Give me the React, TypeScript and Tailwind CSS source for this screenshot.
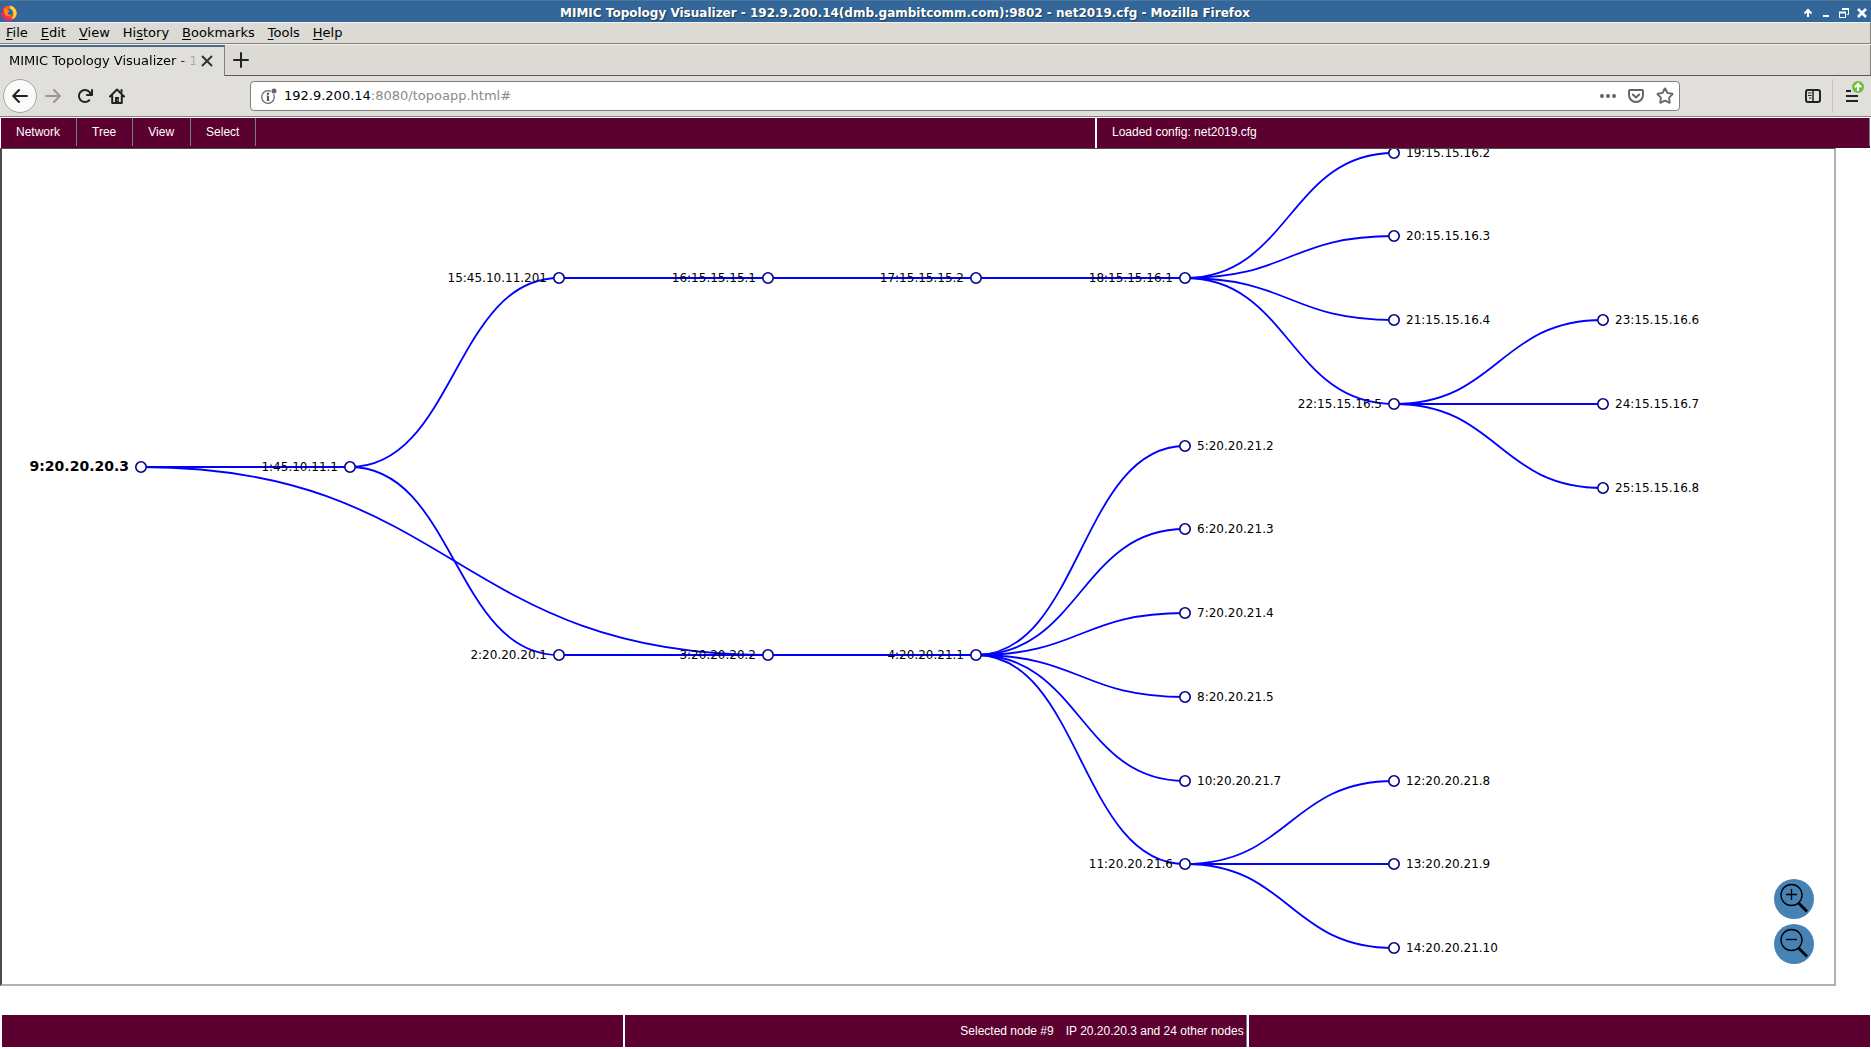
import React from 'react';
import { Plus, Star, X } from 'lucide-react';

type TopoNode = { id: number; ip: string; x: number; y: number; side: 'left' | 'right' };

const COLS = [139, 348, 557, 766, 974, 1183, 1392, 1601];

const nodes: TopoNode[] = [
  { id: 9, ip: '20.20.20.3', x: COLS[0], y: 318, side: 'left' },
  { id: 1, ip: '45.10.11.1', x: COLS[1], y: 318, side: 'left' },
  { id: 15, ip: '45.10.11.201', x: COLS[2], y: 129, side: 'left' },
  { id: 16, ip: '15.15.15.1', x: COLS[3], y: 129, side: 'left' },
  { id: 17, ip: '15.15.15.2', x: COLS[4], y: 129, side: 'left' },
  { id: 18, ip: '15.15.16.1', x: COLS[5], y: 129, side: 'left' },
  { id: 19, ip: '15.15.16.2', x: COLS[6], y: 4, side: 'right' },
  { id: 20, ip: '15.15.16.3', x: COLS[6], y: 87, side: 'right' },
  { id: 21, ip: '15.15.16.4', x: COLS[6], y: 171, side: 'right' },
  { id: 22, ip: '15.15.16.5', x: COLS[6], y: 255, side: 'left' },
  { id: 23, ip: '15.15.16.6', x: COLS[7], y: 171, side: 'right' },
  { id: 24, ip: '15.15.16.7', x: COLS[7], y: 255, side: 'right' },
  { id: 25, ip: '15.15.16.8', x: COLS[7], y: 339, side: 'right' },
  { id: 2, ip: '20.20.20.1', x: COLS[2], y: 506, side: 'left' },
  { id: 3, ip: '20.20.20.2', x: COLS[3], y: 506, side: 'left' },
  { id: 4, ip: '20.20.21.1', x: COLS[4], y: 506, side: 'left' },
  { id: 5, ip: '20.20.21.2', x: COLS[5], y: 297, side: 'right' },
  { id: 6, ip: '20.20.21.3', x: COLS[5], y: 380, side: 'right' },
  { id: 7, ip: '20.20.21.4', x: COLS[5], y: 464, side: 'right' },
  { id: 8, ip: '20.20.21.5', x: COLS[5], y: 548, side: 'right' },
  { id: 10, ip: '20.20.21.7', x: COLS[5], y: 632, side: 'right' },
  { id: 11, ip: '20.20.21.6', x: COLS[5], y: 715, side: 'left' },
  { id: 12, ip: '20.20.21.8', x: COLS[6], y: 632, side: 'right' },
  { id: 13, ip: '20.20.21.9', x: COLS[6], y: 715, side: 'right' },
  { id: 14, ip: '20.20.21.10', x: COLS[6], y: 799, side: 'right' },
];

const links: [number, number][] = [
  [9, 1], [9, 3], [1, 15], [1, 2], [15, 16], [16, 17], [17, 18],
  [18, 19], [18, 20], [18, 21], [18, 22], [22, 23], [22, 24], [22, 25],
  [2, 3], [3, 4], [4, 5], [4, 6], [4, 7], [4, 8], [4, 10], [4, 11],
  [11, 12], [11, 13], [11, 14],
];

const find = (id: number) => nodes.find((n) => n.id === id)!;

// d3-style horizontal diagonal
function diagonal([from, to]: [number, number]) {
  const s = find(from);
  const t = find(to);
  const mid = (s.x + t.x) / 2;
  return `M${s.x},${s.y}C${mid},${s.y} ${mid},${t.y} ${t.x},${t.y}`;
}

function FirefoxLogo() {
  return (
    <svg className="h-4 w-4" viewBox="0 0 16 16">
      <circle cx="8" cy="8.300" r="7.500" fill="#ff5a1f" />
      <path d="M1 5.500C0 10 2 15 7.500 15.900C12 16 15.500 12.500 15.600 8C13 14 6 14 4 9.500C3 7 3 5 3.500 3.200C2 3.800 1.400 4.600 1 5.500Z" fill="#f0245e" />
      <path d="M9 .5C14 1.500 16.300 6 15.500 9.500C14.800 13 12 14.300 10 14C13 12 13 9 11.500 7C10 5 8.500 3 9 .5Z" fill="#ffd52e" />
      <circle cx="8" cy="7.800" r="3.800" fill="#1f5fc0" />
      <path d="M3.200 3.500C5 3.200 6.500 4 7.200 5.200L9 5.800C8.600 7 7 7 6.600 8.200C7 10 9.500 10 11 8.800C10 12 5 12.500 3.600 9C3 7 2.900 5 3.200 3.500Z" fill="#ff8a16" />
    </svg>
  );
}

function TitleBar() {
  return (
    <header className="flex h-[22px] items-center border-t border-[#4c779c] bg-[#336699] px-px pt-0.5 text-white">
      <FirefoxLogo />
      <h1 className="flex-1 pr-2.5 text-center text-xs leading-5 font-bold [text-shadow:1px_1px_1px_#1c3a58]">
        MIMIC Topology Visualizer - 192.9.200.14(dmb.gambitcomm.com):9802 - net2019.cfg - Mozilla Firefox
      </h1>
      <div className="flex items-center gap-2 pr-[3px]">
        <button aria-label="Shade">
          <svg className="h-2.5 w-2.5" viewBox="0 0 10 10" fill="none" stroke="white" strokeWidth="2">
            <path d="M5 9V2M1.500 5.500L5 2L8.500 5.500" />
          </svg>
        </button>
        <button aria-label="Minimize">
          <svg className="h-2.5 w-2.5" viewBox="0 0 10 10">
            <path d="M2 7H8V9H2Z" fill="white" />
          </svg>
        </button>
        <button aria-label="Restore">
          <svg className="h-2.5 w-2.5" viewBox="0 0 10 10" fill="none" stroke="white">
            <path d="M3.500 2V1H9.500V6.500H8M.5 4.500H6.500V9.500H.5Z" />
            <path d="M3 1H10M0 4.500H7" strokeWidth="2" />
          </svg>
        </button>
        <button aria-label="Close">
          <svg className="h-2.5 w-2.5" viewBox="0 0 10 10" stroke="white" strokeWidth="2.500">
            <path d="M1 1L9 9M9 1L1 9" />
          </svg>
        </button>
      </div>
    </header>
  );
}

const browserMenus = [
  ['', 'F', 'ile'],
  ['', 'E', 'dit'],
  ['', 'V', 'iew'],
  ['Hi', 's', 'tory'],
  ['', 'B', 'ookmarks'],
  ['', 'T', 'ools'],
  ['', 'H', 'elp'],
];

function BrowserMenuBar() {
  return (
    <nav className="flex h-[22px] items-center gap-[13px] border-t border-r border-b border-t-[#f2f1ee] border-r-[#857f78] border-b-[#857f78] bg-[#dbdad5] px-1.5 text-[13px] leading-5">
      {browserMenus.map(([before, key, after]) => (
        <button key={before + key + after}>
          {before}
          <span className="underline underline-offset-2">{key}</span>
          {after}
        </button>
      ))}
    </nav>
  );
}

function TabBar() {
  return (
    <div className="flex h-8 border-t border-[#f2f1ee] bg-[#dbdad5] text-[13px]">
      <div className="flex w-[225px] items-center border-t-2 border-r border-t-[#4a6a8d] border-r-[#857f78] bg-[#e0dfdc] pr-2 pb-0.5 pl-[9px]">
        <span className="flex-1 overflow-hidden bg-linear-to-r from-black from-90% to-transparent bg-clip-text whitespace-nowrap text-transparent">
          MIMIC Topology Visualizer - 192.9.200.14
        </span>
        <button aria-label="Close tab">
          <X className="h-[18px] w-[18px] text-[#333]" strokeWidth={2.5} />
        </button>
      </div>
      <div className="flex flex-1 items-center border-r border-b border-r-[#857f78] border-b-[#5c5750] pl-1">
        <button aria-label="New tab">
          <Plus className="h-6 w-6 text-[#222]" strokeWidth={2} />
        </button>
      </div>
    </div>
  );
}

function NavBar() {
  return (
    <div className="flex h-[41px] items-center border-b border-[#857f78] bg-[#e0dfdc]">
      <button className="ml-[3px] flex h-[34px] w-[34px] items-center justify-center rounded-full border border-[#a5a39f] bg-[#fafaf9]" aria-label="Back">
        <svg className="h-4 w-4" viewBox="0 0 16 16" fill="none" stroke="#222" strokeWidth="2" strokeLinecap="round" strokeLinejoin="round">
          <path d="M15 8H1.500M7 2L1.200 8L7 14" />
        </svg>
      </button>
      <button className="ml-2" aria-label="Forward">
        <svg className="h-4 w-4" viewBox="0 0 16 16" fill="none" stroke="#989793" strokeWidth="2" strokeLinecap="round" strokeLinejoin="round">
          <path d="M1 8H14.500M9 2L14.800 8L9 14" />
        </svg>
      </button>
      <button className="ml-4" aria-label="Reload">
        <svg className="h-4 w-4" viewBox="0 0 16 16" fill="#222">
          <path d="M15 1a1 1 0 0 0-1 1v2.418A6.995 6.995 0 1 0 8 15a6.954 6.954 0 0 0 4.950-2.050 1 1 0 0 0-1.414-1.414A5.019 5.019 0 1 1 12.549 6H10a1 1 0 0 0 0 2h5a1 1 0 0 0 1-1V2a1 1 0 0 0-1-1z" />
        </svg>
      </button>
      <button className="ml-4" aria-label="Home">
        <svg className="h-4 w-4" viewBox="0 0 16 16" fill="none" stroke="#222" strokeWidth="2" strokeLinejoin="round" strokeLinecap="round">
          <path d="M1 8.500L8 1.500L15 8.500M3.200 8V15H12.800V8" />
          <path d="M6 9H10V15H6Z" fill="#222" stroke="none" />
          <path d="M8.500 12H9" stroke="#e0dfdc" strokeWidth="1" />
          <path d="M12.500 2V4" />
        </svg>
      </button>

      <div className="ml-[125px] flex h-[30px] flex-1 items-center rounded border border-[#857f78] bg-white px-2.5">
        <svg className="h-4 w-4 shrink-0" viewBox="0 0 16 16">
          <circle cx="7" cy="9" r="6.300" fill="none" stroke="#666" strokeWidth="1.200" />
          <path d="M7 8V12.500" stroke="#555" strokeWidth="2" />
          <circle cx="7" cy="5.800" r="1.200" fill="#555" />
          <path d="M5.500 8H7M5.500 12.300H8.500" stroke="#555" strokeWidth="1" />
          <circle cx="13" cy="3" r="3.300" fill="white" />
          <circle cx="13" cy="3" r="2.500" fill="#666" />
        </svg>
        <a href="#" className="ml-[7px] flex-1 text-[13px]">
          192.9.200.14<span className="text-[#8a8a8a]">:8080/topoapp.html#</span>
        </a>
        <button aria-label="Page actions">
          <svg className="h-4 w-4" viewBox="0 0 16 16" fill="#666">
            <circle cx="2" cy="8" r="2" />
            <circle cx="8" cy="8" r="2" />
            <circle cx="14" cy="8" r="2" />
          </svg>
        </button>
        <button className="ml-3" aria-label="Save to Pocket">
          <svg className="h-4 w-4" viewBox="0 0 16 16" fill="none" stroke="#666" strokeWidth="2" strokeLinecap="round" strokeLinejoin="round">
            <path d="M2 2H14Q15 2 15 3V7A7 7 0 0 1 1 7V3Q1 2 2 2Z" />
            <path d="M4.800 6.500L8 9.500L11.200 6.500" />
          </svg>
        </button>
        <button className="ml-3 -mr-[5px]" aria-label="Bookmark">
          <Star className="h-[18px] w-[18px] text-[#666]" strokeWidth={2.5} />
        </button>
      </div>

      <button className="ml-[125px]" aria-label="Sidebars">
        <svg className="h-4 w-4" viewBox="0 0 16 16" fill="none" stroke="#222" strokeWidth="2">
          <rect x="1" y="2" width="14" height="12" rx="2" />
          <path d="M8 2V14" strokeWidth="1.500" />
          <path d="M3 5H6.500M3 7.500H6.500M4 10H6.500" strokeWidth="1" />
        </svg>
      </button>
      <div className="ml-[11px] h-[34px] w-px bg-[#c6c5c2]" />
      <button className="mr-[7px] ml-[13px]" aria-label="Open menu">
        <svg className="h-8 w-[18px]" viewBox="0 0 18 32">
          <path d="M0 11H5M0 16H12M0 21H12" stroke="#222" strokeWidth="2" />
          <circle cx="12" cy="7" r="6" fill="#6cbf3b" />
          <path d="M12 11V4.500M8.800 7.200L12 4L15.200 7.200" fill="none" stroke="white" strokeWidth="2" />
        </svg>
      </button>
    </div>
  );
}

const appMenus = ['Network', 'Tree', 'View', 'Select'];

function AppMenuBar() {
  return (
    <div className="flex gap-0.5 px-px pt-px font-['Liberation_Sans',sans-serif] text-xs text-white">
      <nav className="flex h-[30px] w-[1094px] bg-[#5c002f]">
        {appMenus.map((label) => (
          <button key={label} className="h-7 border-r border-[#708090] pr-4 pl-[15px]">
            {label}
          </button>
        ))}
      </nav>
      <div className="flex-1 bg-[#5c002f]">
        <p className="border-r border-[#708090] px-[15px] leading-7">Loaded config: net2019.cfg</p>
      </div>
    </div>
  );
}

function ZoomButton({ label, plus }: { label: string; plus?: boolean }) {
  return (
    <button aria-label={label} className="h-10 w-10 rounded-full bg-[#4682b4]">
      <svg viewBox="0 0 40 40" fill="none" stroke="black">
        <circle cx="17.500" cy="16" r="10.500" strokeWidth="1.300" />
        <path d={plus ? 'M12 15.500H23M17.500 10V21' : 'M12 15.500H23'} strokeWidth="1.300" />
        <path d="M24.500 24L33 32.500" strokeWidth="2.800" />
      </svg>
    </button>
  );
}

function Topology() {
  return (
    <main className="relative mr-[35px] h-[838px] overflow-hidden border-2 border-t border-[#b0b0b0] border-t-[#4c4c4c] border-l-[#4c4c4c] bg-white">
      <svg className="h-full w-full" fontSize="12">
        {links.map((link) => (
          <path key={link.join('-')} d={diagonal(link)} fill="none" stroke="#00f" strokeWidth="1.800" />
        ))}
        {nodes.map(({ id, ip, x, y, side }) => (
          <g key={id}>
            <circle cx={x} cy={y} r="5.200" fill="white" stroke="#00008b" strokeWidth="1.600" />
            <text
              x={side === 'left' ? x - 12 : x + 12}
              y={y + 4}
              textAnchor={side === 'left' ? 'end' : 'start'}
              className={id === 9 ? 'text-sm font-bold' : ''}
            >
              {id}:{ip}
            </text>
          </g>
        ))}
      </svg>
      <div className="absolute right-5 bottom-5 flex flex-col gap-[5px]">
        <ZoomButton label="Zoom in" plus />
        <ZoomButton label="Zoom out" />
      </div>
    </main>
  );
}

function StatusBar() {
  return (
    <footer className="mt-[29px] grid h-8 grid-cols-3 gap-0.5 pr-px pl-0.5 font-['Liberation_Sans',sans-serif] text-xs leading-8 text-white">
      <div className="bg-[#5c002f]" />
      <div className="flex justify-end gap-3 border-r border-[#708090] bg-[#5c002f] pr-0.5">
        <span>Selected node #9</span>
        <span>IP 20.20.20.3 and 24 other nodes</span>
      </div>
      <div className="bg-[#5c002f]" />
    </footer>
  );
}

export default function App() {
  return (
    <div className="min-h-screen bg-white font-['DejaVu_Sans',sans-serif] text-black">
      <TitleBar />
      <BrowserMenuBar />
      <TabBar />
      <NavBar />
      <AppMenuBar />
      <Topology />
      <StatusBar />
    </div>
  );
}
